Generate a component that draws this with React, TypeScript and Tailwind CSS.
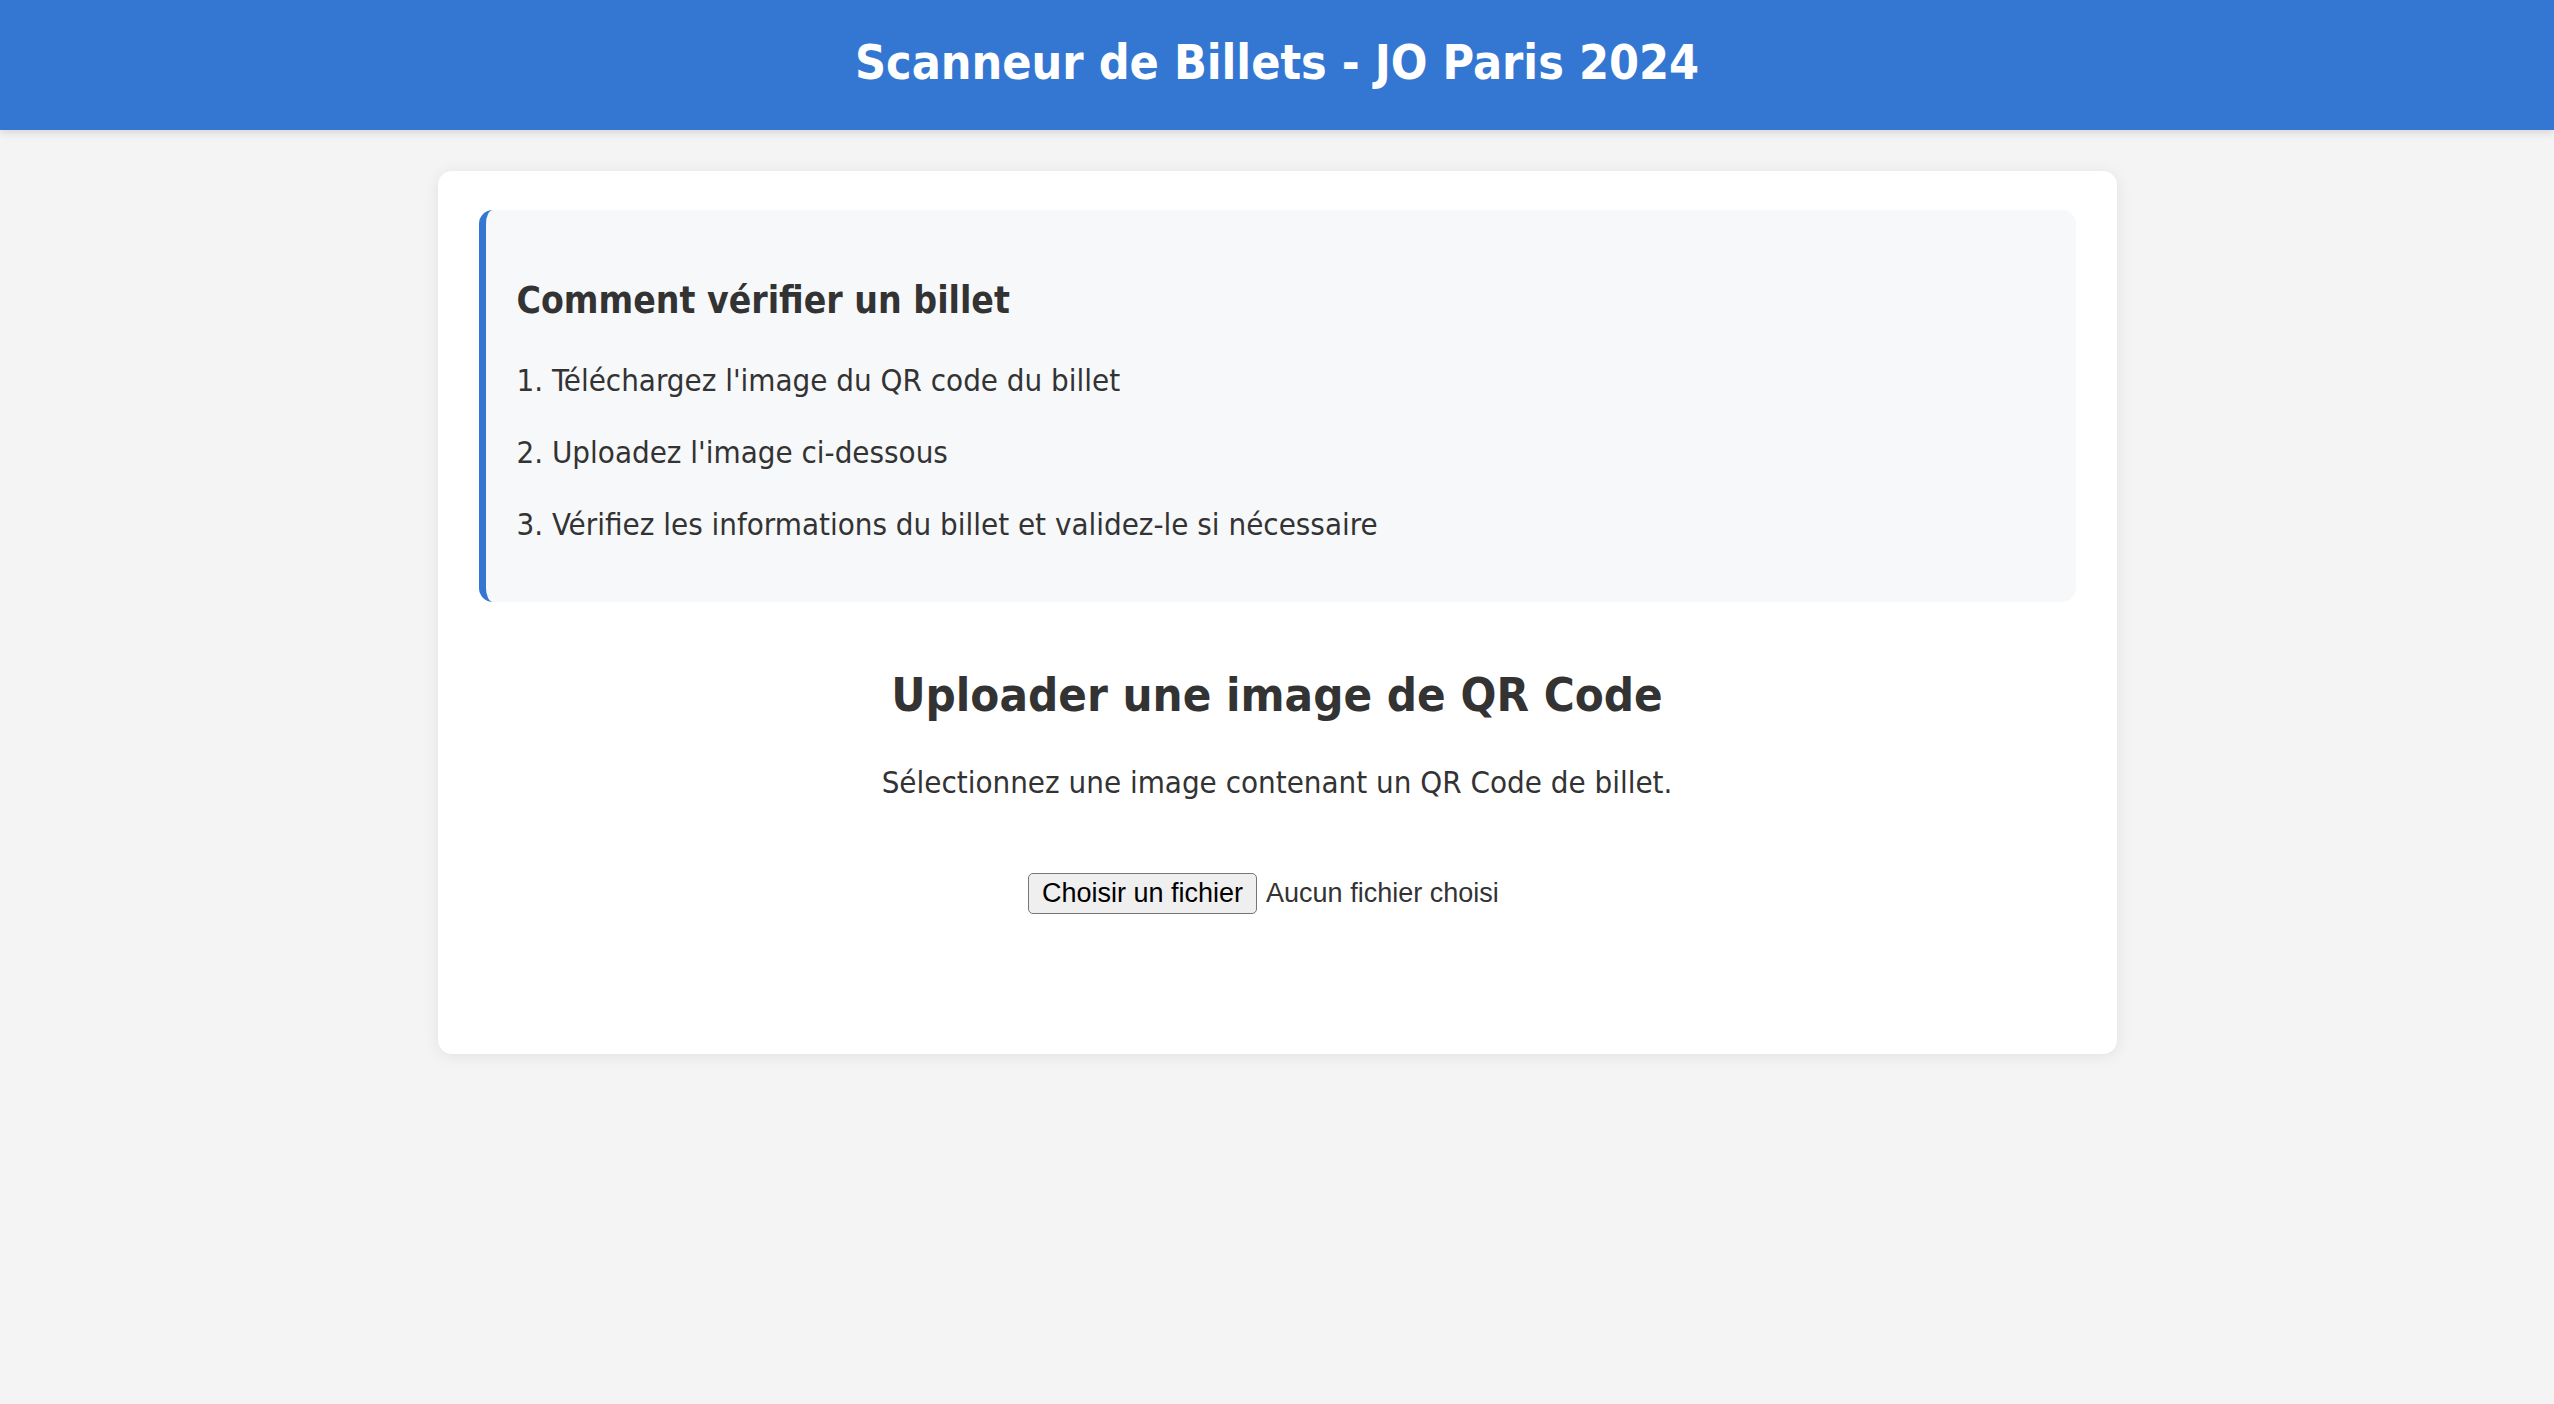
const steps = [
  "1. Téléchargez l'image du QR code du billet",
  "2. Uploadez l'image ci-dessous",
  "3. Vérifiez les informations du billet et validez-le si nécessaire",
];

function FilePicker() {
  return (
    <div className="mx-auto flex w-[498px] items-center font-['Liberation_Sans',Arial,sans-serif] text-[27px]">
      <button className="h-[41px] rounded-[5px] border border-[#767676] bg-[#efefef] px-[13px] leading-none text-black">
        Choisir un fichier
      </button>
      <span className="ml-[9px] text-[#333]">Aucun fichier choisi</span>
    </div>
  );
}

export default function App() {
  return (
    <div className="min-h-screen bg-[#f4f4f4] font-['DejaVu_Sans_Condensed','DejaVu_Sans',sans-serif] text-[#333]">
      <header className="flex h-[130px] items-center justify-center bg-[#3477d2] pb-[6px] shadow-[0_3px_8px_rgba(0,0,0,0.12)]">
        <h1 className="text-[48px] font-bold leading-none text-white">Scanneur de Billets - JO Paris 2024</h1>
      </header>

      <main className="mx-auto mt-[41px] w-[1679px] rounded-[14px] bg-white px-[41px] pt-[39px] pb-[140px] shadow-[0_2px_16px_rgba(0,0,0,0.08)]">
        <div className="rounded-[14px] border-l-[7px] border-[#3477d2] bg-[#f7f8fa] pt-[69px] pb-[60px] pl-[31px]">
          <h3 className="text-[37px] leading-[44px] font-bold">Comment vérifier un billet</h3>
          <div className="mt-[40px] flex flex-col gap-[37px]">
            {steps.map((step) => (
              <p key={step} className="text-[31px] leading-[35px]">
                {step}
              </p>
            ))}
          </div>
        </div>

        <div className="mt-[64px] text-center">
          <h2 className="text-[47px] leading-[58px] font-bold">Uploader une image de QR Code</h2>
          <p className="mt-[41px] text-[31px] leading-[35px]">Sélectionnez une image contenant un QR Code de billet.</p>
        </div>

        <div className="mt-[73px]">
          <FilePicker />
        </div>
      </main>
    </div>
  );
}
